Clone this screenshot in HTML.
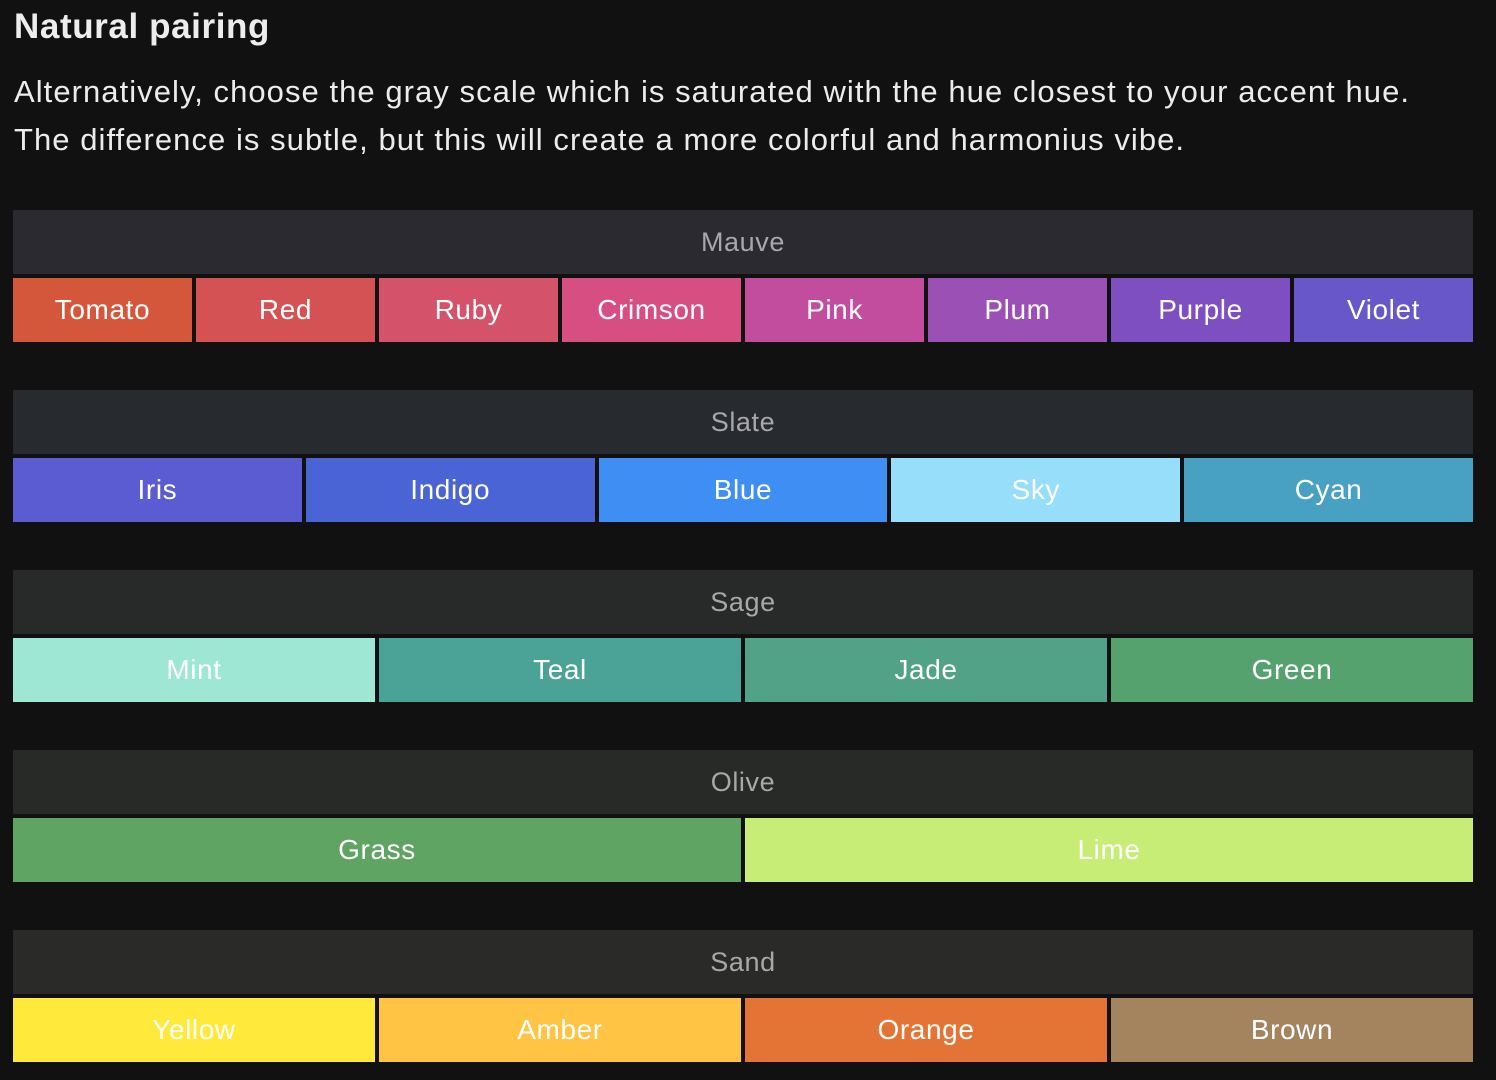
<!DOCTYPE html>
<html><head><style>
body{margin:0;background:#111111;width:1496px;height:1080px;overflow:hidden;font-family:"Liberation Sans",sans-serif;color:#ededed}
h1{position:absolute;left:14px;top:7px;margin:0;font-size:35px;font-weight:bold;letter-spacing:0.6px}
p{position:absolute;left:14px;top:68px;margin:0;font-size:31px;line-height:48px;letter-spacing:1.05px;color:#ececec;white-space:nowrap}
.g{position:absolute;left:13px;width:1460px}
.h{height:64px;line-height:64px;text-align:center;font-size:27px;letter-spacing:0.6px;color:#a8a8ab}
.r{display:flex;gap:4px;margin-top:4px}
.r div{flex:1;height:64px;line-height:64px;text-align:center;font-size:28px;letter-spacing:0.6px;color:#fff}
</style></head><body>
<h1>Natural pairing</h1>
<p>Alternatively, choose the gray scale which is saturated with the hue closest to your accent hue.<br>The difference is subtle, but this will create a more colorful and harmonius vibe.</p>
<div class="g" style="top:210px"><div class="h" style="background:#2b2a30">Mauve</div><div class="r">
<div style="background:#d4573b">Tomato</div><div style="background:#d45254">Red</div><div style="background:#d4526a">Ruby</div><div style="background:#d74e82">Crimson</div><div style="background:#c24d9e">Pink</div><div style="background:#9b50b6">Plum</div><div style="background:#7d4fc1">Purple</div><div style="background:#6857c9">Violet</div></div></div>
<div class="g" style="top:390px"><div class="h" style="background:#272a2e">Slate</div><div class="r">
<div style="background:#5b5bd2">Iris</div><div style="background:#4a64d6">Indigo</div><div style="background:#3f8ef4">Blue</div><div style="background:#96def9">Sky</div><div style="background:#48a0c3">Cyan</div></div></div>
<div class="g" style="top:570px"><div class="h" style="background:#272a29">Sage</div><div class="r">
<div style="background:#9fe7d5">Mint</div><div style="background:#4aa396">Teal</div><div style="background:#51a286">Jade</div><div style="background:#55a26f">Green</div></div></div>
<div class="g" style="top:750px"><div class="h" style="background:#282a28">Olive</div><div class="r">
<div style="background:#60a463">Grass</div><div style="background:#c8ed76">Lime</div></div></div>
<div class="g" style="top:930px"><div class="h" style="background:#2a2a28">Sand</div><div class="r">
<div style="background:#ffe93a">Yellow</div><div style="background:#ffc443">Amber</div><div style="background:#e47436">Orange</div><div style="background:#a4835f">Brown</div></div></div>
</body></html>
